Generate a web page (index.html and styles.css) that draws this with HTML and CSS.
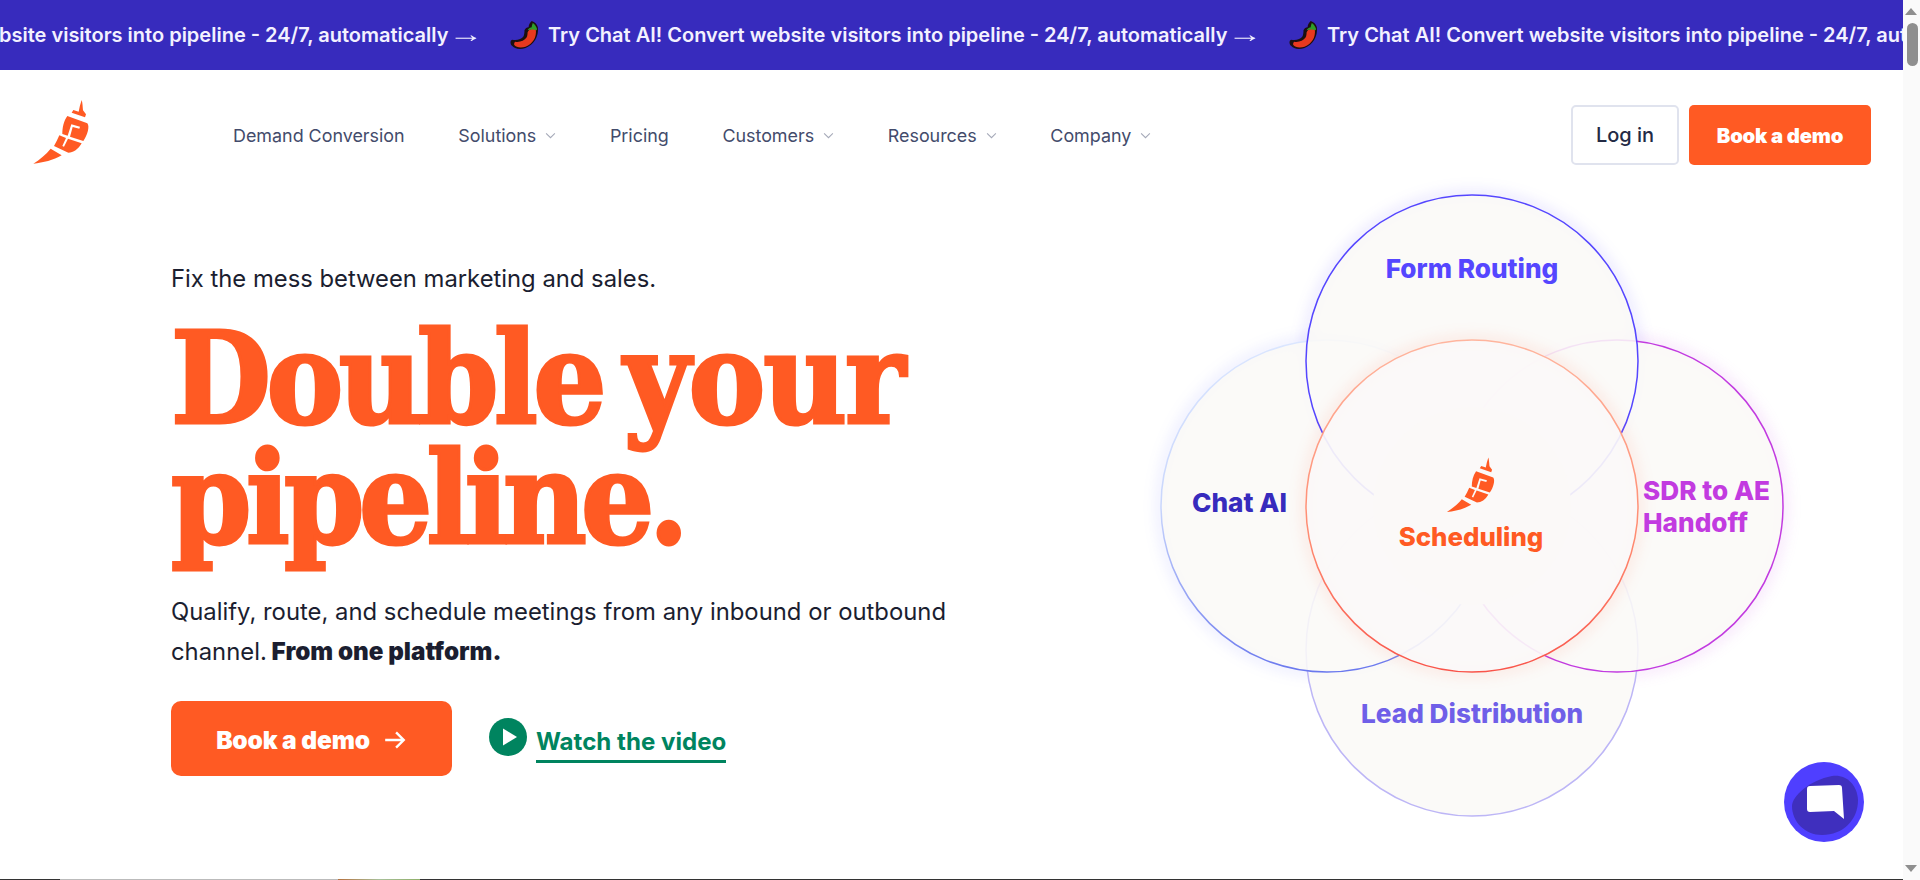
FILE: index.html
```html
<!DOCTYPE html>
<html lang="en">
<head>
    <meta charset="UTF-8">
    <meta name="viewport" content="width=device-width, initial-scale=1.0">
    <title>Double your pipeline</title>
    <link rel="stylesheet" href="styles.css">
</head>
<body>

<svg class="defs" width="0" height="0">
    <defs>
        <symbol id="logo" viewBox="0 0 192 210">
            <path d="M155 12c3 10 3 22 4 31l9 12-3 9-40-14 5-8 16 5c2-12 5-24 9-35z"/>
            <path d="M112 60l60 22c8 10 0 36-12 53l-40-13 8-29 20 5 2-6-26-7-11 34-16-5c0-19 4-39 15-54z"/>
            <path d="M88 118l20 8-11 24 5 2 12-24 41 14c-10 18-25 28-40 28l-43-20c6-10 11-21 16-32z"/>
            <path d="M62 158l33 20c-25 15-55 22-85 25 20-13 38-28 52-45z"/>
        </symbol>
        <symbol id="chili" viewBox="0 0 30 30">
            <path d="M21 1c3 1 5 3 6 6 1 9-4 17-12 20-5 2-11 1-13-2-2-2-2-5 0-6 4 1 9 0 11-3 1-2 1-4 1-6 1-2 2-3 4-3 0-2 1-4 3-6z" fill="#1b1010"/>
            <path d="M20 9c2-1 4-1 5 0 1 8-3 14-10 17-4 1-9 1-11-2 0-1 0-2 1-3 4 1 9-1 11-4 1-2 1-4 1-5 1-2 2-3 3-3z" fill="#e8391f"/>
            <path d="M17 10c1-2 3-3 4-3 0-2 1-3 1-4 2 1 3 3 4 5v2c-3-1-6-1-9 0z" fill="#2f9e2a"/>
        </symbol>
        <linearGradient id="stroke-left" x1="0" y1="0" x2="0" y2="1">
            <stop offset="0" stop-color="#dbe6ff"/>
            <stop offset="0.5" stop-color="#c9d6fc"/>
            <stop offset="1" stop-color="#6a78ee"/>
        </linearGradient>
        <linearGradient id="stroke-center" x1="0" y1="0" x2="0" y2="1">
            <stop offset="0" stop-color="#ffb59e"/>
            <stop offset="0.6" stop-color="#ff8a70"/>
            <stop offset="1" stop-color="#f9544a"/>
        </linearGradient>
    </defs>
</svg>

<div class="page">
    <div class="banner">
        <div class="banner-track">
            <div class="banner-item"><svg class="banner-chili"><use href="#chili"/></svg><span>Try Chat AI! Convert website visitors into pipeline - 24/7, automatically <span class="banner-arrow">→</span></span></div>
            <div class="banner-item"><svg class="banner-chili"><use href="#chili"/></svg><span>Try Chat AI! Convert website visitors into pipeline - 24/7, automatically <span class="banner-arrow">→</span></span></div>
            <div class="banner-item"><svg class="banner-chili"><use href="#chili"/></svg><span>Try Chat AI! Convert website visitors into pipeline - 24/7, automatically <span class="banner-arrow">→</span></span></div>
        </div>
    </div>

    <header class="nav">
        <svg class="nav-logo"><use href="#logo"/></svg>
        <ul class="nav-links">
            <li>Demand Conversion</li>
            <li>Solutions<svg class="chevron" viewBox="0 0 12 8"><path d="M1 1.5l5 5 5-5"/></svg></li>
            <li>Pricing</li>
            <li>Customers<svg class="chevron" viewBox="0 0 12 8"><path d="M1 1.5l5 5 5-5"/></svg></li>
            <li>Resources<svg class="chevron" viewBox="0 0 12 8"><path d="M1 1.5l5 5 5-5"/></svg></li>
            <li>Company<svg class="chevron" viewBox="0 0 12 8"><path d="M1 1.5l5 5 5-5"/></svg></li>
        </ul>
        <div class="nav-actions">
            <a class="btn-login">Log in</a>
            <a class="btn-demo">Book a demo</a>
        </div>
    </header>

    <main class="hero">
        <section class="hero-copy">
            <p class="eyebrow">Fix the mess between marketing and sales.</p>
            <h1>Double <span class="h1-wide">your</span> <span class="h1-tight">pipeline.</span></h1>
            <p class="lead">Qualify, route, and schedule meetings from any inbound or outbound channel. <strong>From one platform.</strong></p>
            <div class="cta-row">
                <a class="btn-cta">Book a demo
                    <svg class="cta-arrow" viewBox="0 0 22 18"><path d="M2 9h17M12 2l7 7-7 7"/></svg>
                </a>
                <a class="video-link">
                    <svg class="play" viewBox="0 0 38 38"><circle cx="19" cy="19" r="19"/><path d="M14 10.5l14 8.5-14 8.5z"/></svg>
                    <span>Watch the video</span>
                </a>
            </div>
        </section>

        <svg class="venn" viewBox="0 0 680 660">
            <circle class="glow glow-top" cx="342" cy="181" r="166"/>
            <circle class="glow glow-left" cx="197" cy="326" r="166"/>
            <circle class="glow glow-right" cx="487" cy="326" r="166"/>
            <circle class="ring ring-bottom" cx="342" cy="470" r="166"/>
            <circle class="ring ring-left" cx="197" cy="326" r="166" stroke="url(#stroke-left)"/>
            <circle class="ring ring-right" cx="487" cy="326" r="166"/>
            <circle class="ring ring-top" cx="342" cy="181" r="166"/>
            <circle class="glow glow-center" cx="342" cy="326" r="166"/>
            <circle class="ring-center" cx="342" cy="326" r="166" stroke="url(#stroke-center)"/>
            <circle class="ring-core" cx="342" cy="326" r="99"/>
            <use href="#logo" class="venn-logo" x="314" y="274" width="55" height="60"/>
            <text class="label label-form" x="342" y="98" text-anchor="middle">Form Routing</text>
            <text class="label label-chat" x="62" y="332">Chat AI</text>
            <text class="label label-sdr" x="513" y="320">SDR to AE</text>
            <text class="label label-sdr" x="513" y="352">Handoff</text>
            <text class="label label-sched" x="341" y="366" text-anchor="middle">Scheduling</text>
            <text class="label label-lead" x="342" y="543" text-anchor="middle">Lead Distribution</text>
        </svg>
    </main>

    <div class="next-peek">
        <span class="peek-dark-start"></span>
        <span class="peek-light"></span>
        <span class="peek-photo"></span>
        <span class="peek-dark"></span>
    </div>

    <div class="chat-widget">
        <svg viewBox="0 0 80 80">
            <circle cx="40" cy="40" r="40" fill="#4f3fff"/>
            <path d="M8 44c0-10 18-26 40-30 14-2 25 8 26 24 0 20-15 35-36 35-17 0-30-13-30-29z" fill="#3f2fbe"/>
            <path d="M23 27c0-2 1-3 3-3l29-1c2 0 3 1 3 3l2 31-10-8-24 1c-2 0-3-1-3-3z" fill="#fff"/>
        </svg>
    </div>
</div>

<div class="scrollbar">
    <span class="arrow-up"></span>
    <span class="thumb"></span>
    <span class="arrow-down"></span>
</div>

</body>
</html>
```

FILE: styles.css
```css
body {
    font-family: Inter, 'Noto Sans', sans-serif;
    background-color: #fff;
    margin: 0;
    display: flex;
    height: 880px;
    overflow: hidden;
}

.defs {
    position: absolute;
}

.page {
    position: relative;
    flex: 1;
    min-width: 0;
    display: flex;
    flex-direction: column;
}

/* top banner */
.banner {
    height: 70px;
    flex: none;
    background-color: #372bbd;
    overflow: hidden;
}

.banner-track {
    display: flex;
    height: 100%;
    margin-left: -269px;
}

.banner-item {
    flex: 0 0 779px;
    display: flex;
    align-items: center;
    gap: 7px;
    color: #f3f1ff;
    font-size: 20px;
    font-weight: 600;
    white-space: nowrap;
}

.banner-chili {
    width: 31px;
    height: 31px;
    flex: none;
}

.banner-arrow {
    display: inline-block;
    font-family: 'Liberation Sans', sans-serif;
    font-size: 24px;
    font-weight: 400;
    line-height: 0;
    transform: scaleX(1.45);
}

/* nav */
.nav {
    height: 130px;
    flex: none;
    display: flex;
    align-items: center;
    box-sizing: border-box;
    padding: 0 32px 0 30px;
}

.nav-logo {
    width: 64px;
    height: 70px;
    fill: #ff5a23;
    margin-bottom: 8px;
}

.nav-links {
    list-style: none;
    display: flex;
    gap: 53.6px;
    margin: 0 0 0 139px;
    padding: 0;
    color: #434b6b;
    font-size: 17.9px;
}

.nav-links li {
    display: flex;
    align-items: center;
    gap: 9px;
}

.chevron {
    width: 11px;
    height: 7px;
    fill: none;
    stroke: #a5a9b8;
    stroke-width: 1.2;
}

.nav-actions {
    margin-left: auto;
    display: flex;
    gap: 10px;
}

.btn-login {
    width: 108px;
    height: 60px;
    box-sizing: border-box;
    display: flex;
    align-items: center;
    justify-content: center;
    border: 2px solid #e0e3ee;
    border-radius: 5px;
    color: #232a45;
    font-size: 20px;
    font-weight: 500;
}

.btn-demo {
    width: 182px;
    height: 60px;
    display: flex;
    align-items: center;
    justify-content: center;
    background-color: #ff5a23;
    border-radius: 5px;
    color: #fff;
    font-size: 20.3px;
    font-weight: 900;
    letter-spacing: -0.2px;
}

/* hero */
.hero {
    flex: 1;
    min-height: 0;
    display: flex;
    padding-left: 171px;
}

.hero-copy {
    flex: 0 0 959px;
    padding-top: 61px;
}

.eyebrow {
    margin: 0;
    color: #1b1e30;
    font-size: 23.8px;
    line-height: 36px;
}

h1 {
    width: 780px;
    margin: 21px 0 0;
    color: #ff5a23;
    font-family: 'DejaVu Serif Condensed', 'DejaVu Serif', serif;
    font-size: 128px;
    font-weight: 700;
    line-height: 120px;
    letter-spacing: -4.5px;
    word-spacing: -14px;
    -webkit-text-stroke: 3px #ff5a23;
}

.h1-wide {
    letter-spacing: -2px;
}

.h1-tight {
    letter-spacing: -5.6px;
}

.lead {
    width: 800px;
    margin: 34px 0 0;
    color: #1b1e30;
    font-size: 23.85px;
    line-height: 40px;
}

.lead strong {
    margin-left: -2px;
    font-size: 24.2px;
    font-weight: 900;
}

.cta-row {
    display: flex;
    align-items: center;
    margin-top: 29px;
}

.btn-cta {
    width: 281px;
    height: 75px;
    box-sizing: border-box;
    padding-top: 2px;
    display: flex;
    align-items: center;
    justify-content: center;
    gap: 13px;
    background-color: #ff5a23;
    border-radius: 10px;
    color: #fff;
    font-size: 24.6px;
    font-weight: 900;
    letter-spacing: -0.2px;
}

.cta-arrow {
    width: 24px;
    height: 20px;
    fill: none;
    stroke: #fff;
    stroke-width: 2.2;
}

.video-link {
    display: flex;
    align-items: center;
    gap: 9px;
    margin-left: 37px;
    color: #00845f;
    font-size: 24.1px;
    font-weight: 700;
}

.video-link span {
    border-bottom: 3px solid #00845f;
    padding-bottom: 4px;
    margin-top: 12px;
}

.play {
    width: 38px;
    height: 38px;
    margin-top: -4px;
    fill: #00845f;
}

.play path {
    fill: #fff;
}

/* venn diagram */
.venn {
    flex: none;
    width: 680px;
    height: 660px;
    margin-top: -20px;
    overflow: visible;
}

.glow {
    fill: none;
    stroke-width: 8;
    filter: blur(7px);
}

.glow-top {
    stroke: rgba(85, 70, 255, 0.16);
}

.glow-left {
    stroke: rgba(85, 90, 255, 0.14);
}

.glow-right {
    stroke: rgba(194, 59, 224, 0.16);
}

.glow-center {
    stroke: rgba(255, 90, 60, 0.14);
}

.ring {
    fill: #faf9f7;
    fill-opacity: 0.88;
    stroke-width: 1.5;
}

.ring-top {
    stroke: #5546ff;
}

.ring-right {
    stroke: #c23be0;
}

.ring-bottom {
    stroke: #bdb6f6;
}

.ring-center {
    fill: #fbf9f8;
    fill-opacity: 0.92;
    stroke-width: 1.5;
}

.ring-core {
    fill: #fbf9f8;
}

.venn-logo {
    fill: #ff5a23;
}

.label {
    font-size: 26.2px;
    font-weight: 800;
}

.label-form {
    fill: #5546ff;
}

.label-chat {
    fill: #372bbd;
}

.label-sdr {
    fill: #c23be0;
}

.label-sched {
    fill: #ff5a23;
    font-size: 25.8px;
}

.label-lead {
    fill: #6f5fe8;
}

/* edge of the next section */
.next-peek {
    height: 1px;
    flex: none;
    display: flex;
}

.peek-dark-start {
    width: 60px;
    background-color: #333;
}

.peek-light {
    width: 278px;
    background-color: #bbb;
}

.peek-photo {
    width: 82px;
    background: linear-gradient(90deg, #b5713f, #a9c09a, #8fb06a);
}

.peek-dark {
    flex: 1;
    background-color: #333;
}

.chat-widget {
    position: absolute;
    left: 1784px;
    top: 762px;
    width: 80px;
    height: 80px;
}

/* fake browser scrollbar */
.scrollbar {
    position: relative;
    flex: 0 0 17px;
    background-color: #fafafa;
}

.arrow-up,
.arrow-down {
    position: absolute;
    left: 2px;
    border-left: 6.5px solid transparent;
    border-right: 6.5px solid transparent;
}

.arrow-up {
    top: 8px;
    border-bottom: 7px solid #8f8f8f;
}

.arrow-down {
    bottom: 8px;
    border-top: 7px solid #8f8f8f;
}

.thumb {
    position: absolute;
    left: 4px;
    top: 23px;
    width: 11px;
    height: 43px;
    border-radius: 6px;
    background-color: #8f8f8f;
}
```
